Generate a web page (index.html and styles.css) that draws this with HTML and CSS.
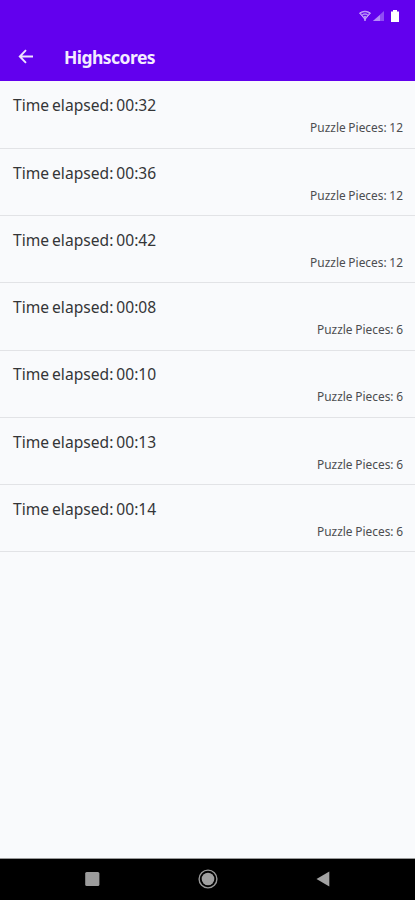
FILE: index.html
```html
<!DOCTYPE html>
<html lang="en">
<head>
<meta charset="utf-8">
<title>Highscores</title>
<link rel="stylesheet" href="styles.css">
</head>
<body>
<header>
  <div class="status">
    <svg width="44" height="16" viewBox="0 0 44 16" fill="none">
      <path d="M1.500 4Q7 .4 12.500 4L7 10.500Z" fill="#b58bf8" stroke="#c7a5fa"/>
      <path d="M3.500 5Q7 2.500 10.500 5M5 7Q7 5.500 9 7" stroke="#6200ee" stroke-width="1.100"/>
      <path d="M7 9v3" stroke="#c7a5fa" stroke-width="1.400"/>
      <path d="M15 12L26 2v10Z" fill="#8f4df4"/>
      <path d="M15 12l7-6v6Z" fill="#b58bf8"/>
      <path d="M33 2.500h2V1h4v1.500h2V13h-8Z" fill="#fff"/>
    </svg>
  </div>
  <div class="appbar">
    <svg class="back" width="16" height="16" viewBox="0 0 16 16" fill="none" stroke="#eee2ff" stroke-width="1.900"><path d="M8 1.200L1.800 7.500L8 13.800M2 7.500h13"/></svg>
    <h1>Highscores</h1>
  </div>
</header>
<main>
  <ul>
    <li><span class="time">Time elapsed: 00:32</span><span class="pieces">Puzzle Pieces: 12</span></li>
    <li><span class="time">Time elapsed: 00:36</span><span class="pieces">Puzzle Pieces: 12</span></li>
    <li><span class="time">Time elapsed: 00:42</span><span class="pieces">Puzzle Pieces: 12</span></li>
    <li><span class="time">Time elapsed: 00:08</span><span class="pieces">Puzzle Pieces: 6</span></li>
    <li><span class="time">Time elapsed: 00:10</span><span class="pieces">Puzzle Pieces: 6</span></li>
    <li><span class="time">Time elapsed: 00:13</span><span class="pieces">Puzzle Pieces: 6</span></li>
    <li><span class="time">Time elapsed: 00:14</span><span class="pieces">Puzzle Pieces: 6</span></li>
  </ul>
</main>
<nav>
  <svg width="20" height="20" viewBox="0 0 20 20"><rect x="3.200" y="3" width="14.200" height="14" rx="1.500" fill="#9c9c9c"/></svg>
  <svg width="20" height="20" viewBox="0 0 20 20"><circle cx="10" cy="10" r="8.900" fill="none" stroke="#989898" stroke-width="1.400"/><circle cx="10" cy="10" r="6.300" fill="#a0a0a0"/></svg>
  <svg width="20" height="20" viewBox="0 0 20 20"><path d="M3.500 10L16.300 2.500v15Z" fill="#a2a2a2"/></svg>
</nav>
</body>
</html>
```
FILE: styles.css
```css
* { box-sizing: border-box; }
body {
  margin: 0;
  height: 900px;
  display: flex;
  flex-direction: column;
  overflow: hidden;
  background: #f9fafc;
  font-family: "Noto Sans", "Open Sans", sans-serif;
}
header {
  height: 81.4px;
  background: #6200ee;
  color: #fff;
}
.status {
  height: 33px;
  padding: 9px 13px 0 0;
  display: flex;
  justify-content: flex-end;
}
.appbar {
  height: 48px;
  padding-left: 18px;
  display: flex;
  align-items: center;
  gap: 30px;
}
h1 {
  margin: 0;
  font-size: 17.5px;
  line-height: 24px;
  font-weight: 700;
  letter-spacing: -0.55px;
  color: #f4ecff;
}
main { flex: 1; }
ul {
  margin: 0;
  padding: 0;
  list-style: none;
}
li {
  height: 67.3px;
  padding: 12.9px 12px 0 13px;
  display: flex;
  flex-direction: column;
  border-bottom: 1.5px solid #e2e3e6;
}
.time {
  font-size: 15.6px;
  line-height: 22px;
  letter-spacing: 0.02px;
  word-spacing: -1.2px;
  color: #343537;
}
.pieces {
  align-self: flex-end;
  font-size: 11.9px;
  line-height: 22px;
  letter-spacing: 0.02px;
  word-spacing: -0.5px;
  color: #4c4d50;
}
nav {
  height: 42.5px;
  padding: 0 82px 1px;
  display: flex;
  align-items: center;
  justify-content: space-between;
  border-top: 1px solid #999;
  background: #000;
}
```
